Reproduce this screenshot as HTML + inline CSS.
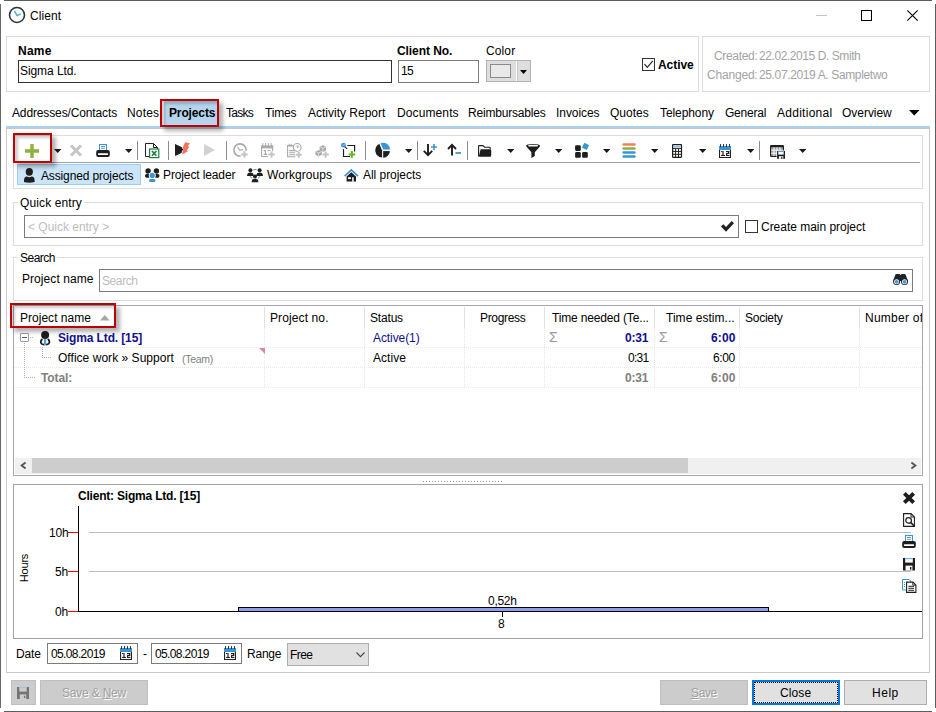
<!DOCTYPE html>
<html lang="en"><head><meta charset="utf-8"><title>Client</title>
<style>
html,body{margin:0;padding:0;}
body{width:936px;height:712px;position:relative;overflow:hidden;background:#fff;
 font-family:"Liberation Sans",sans-serif;font-size:12px;color:#000;}
.a{position:absolute;box-sizing:border-box;}
.t{position:absolute;white-space:nowrap;line-height:14px;font-size:12px;}
.t u{text-decoration:underline;}
svg{position:absolute;overflow:visible;}
.gb{border:1px solid #dcdcdc;}
.inp{border:1px solid #7a7a7a;background:#fff;}
.sep{background:#8c8c8c;width:1px;}
.btn{border:1px solid #adadad;background:#e1e1e1;}
.btnd{border:1px solid #bfbfbf;background:#cccccc;}
.red{border:2px solid #bf0000;box-shadow:4px 4px 4px rgba(0,0,0,.30), inset 3px 3px 3px rgba(0,0,0,.20);}
</style></head><body>
<div class="a " style="left:4px;top:0px;width:928px;height:1px;background:#5c5c5c"></div>
<div class="a " style="left:0px;top:4px;width:1px;height:704px;background:#686868"></div>
<div class="a " style="left:935px;top:4px;width:1px;height:704px;background:#5c5c5c"></div>
<div class="a " style="left:4px;top:711px;width:928px;height:1px;background:#5c5c5c"></div>
<svg style="left:8px;top:6px" width="18" height="18" viewBox="0 0 18 18"><circle cx="9" cy="9" r="7.5" fill="#fff" stroke="#26343a" stroke-width="1.55"/><path d="M6.4 4.8L9.1 9.7L12.8 7.8" stroke="#4fb3b8" stroke-width="1.5" fill="none" stroke-linejoin="round"/></svg>
<div class="a " style="left:816px;top:15px;width:11px;height:1px;background:#c4c4c4"></div>
<div class="a " style="left:861px;top:10px;width:11px;height:11px;border:1px solid #000"></div>
<svg style="left:907px;top:10px" width="11" height="11" viewBox="0 0 11 11"><path d="M0.3 0.3L10.7 10.7M10.7 0.3L0.3 10.7" stroke="#000" stroke-width="1.1" fill="none"/></svg>
<div class="a gb" style="left:6px;top:36px;width:693px;height:56px;"></div>
<div class="a gb" style="left:702px;top:36px;width:228px;height:56px;"></div>
<div class="a inp" style="left:18px;top:60px;width:374px;height:23px;border-color:#333"></div>
<div class="a inp" style="left:398px;top:60px;width:81px;height:23px;"></div>
<div class="a btn" style="left:486px;top:60px;width:45px;height:22px;background:#dedede;border-color:#b4b4b4"></div>
<div class="a " style="left:516px;top:61px;width:1px;height:20px;background:#fff"></div>
<div class="a " style="left:517px;top:61px;width:1px;height:20px;background:#c8c8c8"></div>
<div class="a " style="left:490px;top:64px;width:21px;height:14px;border:1px solid #8a8a8a;background:#e9e9e9"></div>
<svg style="left:520px;top:70px" width="8" height="4" viewBox="0 0 8 4"><path d="M0 0h7L3.5 4z" fill="#000"/></svg>
<div class="a " style="left:642px;top:58px;width:13px;height:13px;border:1px solid #333;background:#fff"></div>
<svg style="left:642px;top:58px" width="13" height="13" viewBox="0 0 13 13"><path d="M2.5 6.2L5.3 9.3L10.8 2.9" stroke="#222" stroke-width="1.15" fill="none"/></svg>
<div class="a " style="left:164px;top:101px;width:53px;height:25px;background:#b5d5ee"></div>
<div class="a " style="left:6px;top:126px;width:924px;height:2px;background:#a8d2f0"></div>
<div class="a " style="left:6px;top:128px;width:924px;height:545px;border:1px solid #c8c8c8"></div>
<svg style="left:909px;top:110px" width="11" height="6" viewBox="0 0 11 6"><path d="M0 0h10.5L5.25 5.6z" fill="#000"/></svg>
<div class="a gb" style="left:13px;top:135px;width:910px;height:54px;"></div>
<div class="a " style="left:14px;top:162px;width:906px;height:1px;background:#a0a0a0"></div>
<svg style="left:25px;top:144px" width="14" height="14" viewBox="0 0 14 14"><path d="M5.3 0h3.4v5.3H14v3.4H8.7V14H5.3V8.7H0V5.3h5.3z" fill="#8db13c"/></svg>
<svg style="left:54.3px;top:149px" width="8" height="4" viewBox="0 0 8 4"><path d="M0 0h7.4L3.7 4z" fill="#1a1a1a"/></svg>
<svg style="left:70px;top:144.5px" width="12" height="11" viewBox="0 0 12 11"><path d="M1 0.5L11 10.5M11 0.5L1 10.5" stroke="#c6c6c6" stroke-width="3" fill="none"/></svg>
<svg style="left:96px;top:144px" width="14" height="13" viewBox="0 0 14 13"><rect x="3.5" y="0.5" width="7" height="6" fill="#fff" stroke="#3a96d2" stroke-width="1"/><path d="M5 2.5h4M5 4.3h4" stroke="#3a96d2" stroke-width=".9"/><rect x="0.2" y="6" width="13.6" height="7" rx="2" fill="#1e1e1e"/><rect x="2" y="9.3" width="10" height="1.6" rx=".5" fill="#fff"/></svg>
<svg style="left:125px;top:149px" width="8" height="4" viewBox="0 0 8 4"><path d="M0 0h7.4L3.7 4z" fill="#1a1a1a"/></svg>
<div class="a sep" style="left:137px;top:141px;width:1px;height:19px;"></div>
<svg style="left:145px;top:143px" width="15" height="15" viewBox="0 0 15 15"><path d="M0.5 0.5h8l4 4v9h-12z" fill="#fff" stroke="#222" stroke-width="1"/><path d="M8.5 0.5v4h4" fill="none" stroke="#222"/><rect x="4.6" y="6" width="9.2" height="8.6" fill="#fff" stroke="#1e7e45" stroke-width="1.2"/><path d="M7 8L11.4 12.8M11.4 8L7 12.8" stroke="#1e7e45" stroke-width="1.7"/></svg>
<div class="a sep" style="left:168px;top:141px;width:1px;height:19px;"></div>
<svg style="left:175px;top:142px" width="16" height="14" viewBox="0 0 16 14"><path d="M0 1.9V13.9L13 7.9z" fill="#1e1e1e"/><path d="M10.2 0.3L15 1.2L12.9 4L14.3 4.8L12 8L12.6 9.6L7.2 12.6L7.5 9.4L8.9 7.6L7.6 5.7z" fill="#f8705c" stroke="#fff" stroke-width="1.3" paint-order="stroke" stroke-linejoin="round"/><path d="M6 7.6h2.4" stroke="#1e1e1e" stroke-width="1"/></svg>
<svg style="left:204px;top:144px" width="11" height="12" viewBox="0 0 11 12"><path d="M0 0v12L11 6z" fill="#d2d2d2"/></svg>
<div class="a sep" style="left:226px;top:141px;width:1px;height:19px;"></div>
<svg style="left:233px;top:143px" width="15" height="15" viewBox="0 0 15 15"><circle cx="7" cy="7" r="6.1" fill="none" stroke="#a9a9a9" stroke-width="1.6"/><path d="M4.6 3.8L7 7.6L10 6.2" stroke="#a9a9a9" stroke-width="1.1" fill="none"/><rect x="7.6" y="7.8" width="8" height="8" fill="#fff"/><path d="M11.4 8.2v6.4M8.2 11.4h6.4" stroke="#c4c4c4" stroke-width="2"/></svg>
<svg style="left:261px;top:143px" width="14" height="15" viewBox="0 0 14 15"><rect x="0.6" y="3.5" width="11" height="10" fill="#fff" stroke="#a9a9a9" stroke-width="1.1"/><rect x="0" y="2.4" width="12.2" height="3" fill="#a9a9a9"/><path d="M1.8 0v3M4.6 0v3M7.4 0v3M10.2 0v3" stroke="#a9a9a9" stroke-width="1"/><path d="M2.6 7.6h1.8v4M2.6 11.4h3.6M6.6 7.6h2.6" stroke="#a9a9a9" stroke-width="1.1" fill="none"/><rect x="6.8" y="8.2" width="8" height="8" fill="#fff"/><path d="M10.6 8.4v6.4M7.4 11.6h6.4" stroke="#c4c4c4" stroke-width="2"/></svg>
<svg style="left:287px;top:142.5px" width="15" height="15" viewBox="0 0 15 15"><path d="M0.6 2.6h9v11.2h-9z" fill="#fff" stroke="#a9a9a9" stroke-width="1.1"/><path d="M2.2 0.8v3M4.2 0.8v3" stroke="#a9a9a9"/><path d="M2.2 7.6h6M2.2 9.7h6M2.2 11.8h6" stroke="#a9a9a9" stroke-width="1.1"/><circle cx="10.2" cy="4.4" r="3.9" fill="#fff" stroke="#a9a9a9" stroke-width="1.1"/><path d="M10.2 2.2v2.4l1.8-0.9" stroke="#a9a9a9" fill="none"/><rect x="8.4" y="8.8" width="7" height="7" fill="#fff"/><path d="M11.8 8.8v6M8.8 11.8h6" stroke="#c4c4c4" stroke-width="2"/></svg>
<svg style="left:315px;top:144.5px" width="14" height="13" viewBox="0 0 14 13"><path d="M4.6 1.8L7.8 0.3L11 1.8V5.4L7.8 7L4.6 5.4z" fill="#a9a9a9"/><path d="M0.4 6.4L3.6 4.9L6.8 6.4V9.8L3.6 11.4L0.4 9.8z" fill="#a9a9a9"/><path d="M4.6 1.8L7.8 3.3L11 1.8M7.8 3.3V7M0.4 6.4L3.6 7.9L6.8 6.4M3.6 7.9v3.5" stroke="#e8e8e8" stroke-width=".8" fill="none"/><path d="M10.6 6.4v6.4M7.4 9.6h6.4" stroke="#c4c4c4" stroke-width="2"/></svg>
<svg style="left:341px;top:143px" width="15" height="15" viewBox="0 0 15 15"><path d="M6.3 2.5H13.6V8.6M2.5 6V13.5H9" stroke="#1e1e1e" stroke-width="1.2" fill="none"/><path d="M3.5 3.5L6.2 5.8" stroke="#1e1e1e" stroke-width="1.1"/><circle cx="2.4" cy="2.2" r="2.4" fill="#3a96d2"/><path d="M1.4 3.2L3.4 1.2" stroke="#cfe6f6" stroke-width=".8"/><path d="M10.9 8.1V14.7M7.6 11.4H14.2" stroke="#5cc010" stroke-width="2"/></svg>
<div class="a sep" style="left:365px;top:141px;width:1px;height:19px;"></div>
<svg style="left:375px;top:143px" width="16" height="16" viewBox="0 0 16 16"><path d="M7.5 7.4L4.62 0.26A7.7 7.7 0 0 0 7.50 15.10z" fill="#1e1e1e" stroke="#fff" stroke-width=".9" stroke-linejoin="round" transform="translate(0,0)"/><path d="M7.5 7.4L7.50 15.10A7.7 7.7 0 0 0 15.20 7.40z" fill="#1e1e1e" stroke="#fff" stroke-width=".9" stroke-linejoin="round" transform="translate(0.2,0.2)"/><path d="M7.5 7.4L15.20 7.40A7.7 7.7 0 0 0 4.62 0.26z" fill="#3a96d2" stroke="#fff" stroke-width=".9" stroke-linejoin="round" transform="translate(0.4,-0.4)"/></svg>
<svg style="left:405px;top:149px" width="8" height="4" viewBox="0 0 8 4"><path d="M0 0h7.4L3.7 4z" fill="#1a1a1a"/></svg>
<div class="a sep" style="left:417px;top:141px;width:1px;height:19px;"></div>
<svg style="left:423px;top:144px" width="15" height="13" viewBox="0 0 15 13"><path d="M5 0v11M0.8 6.8L5 11.2L9.2 6.8" stroke="#1e1e1e" stroke-width="1.9" fill="none"/><path d="M11 0v6M8 3h6" stroke="#3a96d2" stroke-width="1.6"/></svg>
<svg style="left:447.7px;top:144px" width="14" height="13" viewBox="0 0 14 13"><path d="M4 11.5V0.8M0 5L4 0.8L8 5" stroke="#1e1e1e" stroke-width="1.9" fill="none"/><path d="M7.5 9h5.5" stroke="#3a96d2" stroke-width="1.8"/></svg>
<div class="a sep" style="left:467px;top:141px;width:1px;height:19px;"></div>
<svg style="left:478px;top:145px" width="14" height="12" viewBox="0 0 14 12"><path d="M0.6 11.4V1.2Q0.6 0.6 1.2 0.6H5L6.5 2.2H11.5Q12.2 2.2 12.2 2.9V4" fill="#fff" stroke="#1e1e1e" stroke-width="1.1"/><path d="M2.6 4.3h9.6Q13.2 4.3 13.2 5.3V10.5Q13.2 11.8 12 11.8H1.6Q0.7 11.8 1 10.8z" fill="#1e1e1e"/></svg>
<svg style="left:506.8px;top:149px" width="8" height="4" viewBox="0 0 8 4"><path d="M0 0h7.4L3.7 4z" fill="#1a1a1a"/></svg>
<svg style="left:526px;top:144px" width="14.2" height="14" viewBox="0 0 15 14" preserveAspectRatio="none"><path d="M0.2 1.6Q0.2 0 7.5 0T14.8 1.6Q14.8 2.6 13.8 3.6L9.3 8.2V12L5.7 14V8.2L1.2 3.6Q0.2 2.6 0.2 1.6z" fill="#1e1e1e"/><ellipse cx="7.5" cy="1.7" rx="5.4" ry="0.9" fill="#f4f4f4"/></svg>
<svg style="left:555px;top:149px" width="8" height="4" viewBox="0 0 8 4"><path d="M0 0h7.4L3.7 4z" fill="#1a1a1a"/></svg>
<svg style="left:575px;top:143px" width="15" height="15" viewBox="0 0 15 15"><rect x="0.1" y="2.3" width="5.7" height="5.6" rx="1.3" fill="#1e1e1e"/><rect x="0.1" y="9.1" width="5.7" height="5.7" rx="1.3" fill="#1e1e1e"/><rect x="7.1" y="9.1" width="5.7" height="5.7" rx="1.3" fill="#1e1e1e"/><rect x="7.8" y="0.7" width="5.4" height="5.4" rx=".7" fill="#3a96d2" transform="rotate(25 10.5 3.4)"/></svg>
<svg style="left:603px;top:149px" width="8" height="4" viewBox="0 0 8 4"><path d="M0 0h7.4L3.7 4z" fill="#1a1a1a"/></svg>
<svg style="left:622px;top:143px" width="14" height="15" viewBox="0 0 14 15"><path d="M1.6 1.4h10.9" stroke="#f97a66" stroke-width="2.5" stroke-linecap="round"/><path d="M1.6 5.5h10.9" stroke="#8db13c" stroke-width="2.5" stroke-linecap="round"/><path d="M1.6 9.5h10.9M1.6 13.4h10.9" stroke="#3a96d2" stroke-width="2.5" stroke-linecap="round"/></svg>
<svg style="left:650.8px;top:149px" width="8" height="4" viewBox="0 0 8 4"><path d="M0 0h7.4L3.7 4z" fill="#1a1a1a"/></svg>
<svg style="left:672px;top:144px" width="11" height="14" viewBox="0 0 11 14"><rect x="0" y="0" width="10.1" height="13.9" rx="1.1" fill="#1e1e1e"/><rect x="1.3" y="1.2" width="7.5" height="2.9" fill="#fff"/><rect x="1.9" y="1.8" width="6.3" height="1.7" fill="#7cc0ee"/><rect x="1.20" y="5.00" width="1.9" height="1.9" fill="#fff"/><rect x="1.20" y="7.90" width="1.9" height="1.9" fill="#fff"/><rect x="1.20" y="10.80" width="1.9" height="1.9" fill="#fff"/><rect x="4.10" y="5.00" width="1.9" height="1.9" fill="#fff"/><rect x="4.10" y="7.90" width="1.9" height="1.9" fill="#fff"/><rect x="4.10" y="10.80" width="1.9" height="1.9" fill="#fff"/><rect x="7.00" y="5.00" width="1.9" height="1.9" fill="#fff"/><rect x="7.00" y="7.90" width="1.9" height="1.9" fill="#fff"/><rect x="7.00" y="10.80" width="1.9" height="1.9" fill="#fff"/></svg>
<svg style="left:699px;top:149px" width="8" height="4" viewBox="0 0 8 4"><path d="M0 0h7.4L3.7 4z" fill="#1a1a1a"/></svg>
<svg style="left:719px;top:144px" width="12" height="14" viewBox="0 0 12 14"><rect x="0" y="2" width="12" height="4.2" fill="#3a96d2"/><path d="M0.55 6V13.45H11.45V6" fill="#fff" stroke="#222" stroke-width="1.1"/><path d="M1.5 0v3.1M4.5 0v3.1M7.5 0v3.1M10.5 0v3.1" stroke="#222" stroke-width=".9"/><g fill="#222"><rect x="3.4" y="7" width="1.20" height="5.00"/><rect x="2.1" y="7" width="1.30" height="1.10"/><rect x="2.1" y="10.9" width="3.90" height="1.10"/><rect x="7" y="7" width="3.20" height="1.10"/><rect x="9" y="7" width="1.20" height="2.90"/><rect x="7" y="8.9" width="3.20" height="1.10"/><rect x="7" y="9.5" width="1.20" height="2.50"/><rect x="7" y="10.9" width="3.40" height="1.10"/></g></svg>
<svg style="left:747px;top:149px" width="8" height="4" viewBox="0 0 8 4"><path d="M0 0h7.4L3.7 4z" fill="#1a1a1a"/></svg>
<div class="a sep" style="left:759px;top:141px;width:1px;height:19px;"></div>
<svg style="left:770px;top:145px" width="16" height="14" viewBox="0 0 16 14"><rect x="0" y="0" width="14" height="12" rx="1.3" fill="#1e1e1e"/><rect x="1.1" y="2.2" width="11.8" height="8.7" fill="#9a9a9a"/><path d="M4 2.2v8.7M7 2.2v8.7M10 2.2v8.7M1.1 5.2h11.8M1.1 8.2h11.8" stroke="#fff" stroke-width="1"/><rect x="6.6" y="5.4" width="8.8" height="8.8" fill="#fff"/><rect x="7.1" y="5.9" width="7.9" height="7.9" fill="#1e1e1e"/><rect x="8.3" y="5.9" width="5.4" height="3.7" fill="#fff"/><rect x="8.3" y="5.9" width="5.4" height="1" fill="#3a96d2"/><rect x="8.9" y="11.2" width="4.4" height="2.6" fill="#fff"/><rect x="11.2" y="11.7" width="1.2" height="2.1" fill="#1e1e1e"/></svg>
<svg style="left:799px;top:149px" width="8" height="4" viewBox="0 0 8 4"><path d="M0 0h7.4L3.7 4z" fill="#1a1a1a"/></svg>
<div class="a " style="left:17px;top:164px;width:124px;height:21px;background:#cce4f7;border:1px solid #9fcdf0"></div>
<svg style="left:24px;top:167px" width="11" height="16" viewBox="0 0 11 16"><ellipse cx="5.3" cy="4.8" rx="3.6" ry="3.9" fill="#1e1e1e"/><path d="M0 15V13.2Q0 9.6 3 9.4Q5.3 11 7.6 9.4Q10.6 9.6 10.6 13.2V15Q5.3 16.6 0 15z" fill="#1e1e1e"/></svg>
<svg style="left:145px;top:168px" width="15" height="15" viewBox="0 0 15 15"><circle cx="3.1" cy="3" r="2.7" fill="#1e1e1e"/><circle cx="11.4" cy="3" r="2.7" fill="#1e1e1e"/><rect x="0" y="6.1" width="5.8" height="3.7" rx="1.7" fill="#1e1e1e"/><rect x="8.7" y="6.1" width="5.8" height="3.7" rx="1.7" fill="#1e1e1e"/><circle cx="7.25" cy="7.4" r="3.5" fill="#fff"/><circle cx="7.25" cy="7.4" r="2.6" fill="#3a96d2"/><rect x="4" y="10.9" width="6.5" height="3" rx="1.5" fill="#3a96d2"/></svg>
<svg style="left:247px;top:168px" width="16" height="14" viewBox="0 0 16 14"><circle cx="8" cy="6.5" r="5" fill="none" stroke="#3a96d2" stroke-width="1"/><circle cx="3.4" cy="2.4" r="3" fill="#fff"/><circle cx="12.6" cy="2.4" r="3" fill="#fff"/><circle cx="8" cy="9.4" r="3" fill="#fff"/><circle cx="3.4" cy="2.2" r="2.00" fill="#1e1e1e"/><path d="M0.04 7.96Q0.04 4.60 3.40 4.60T6.76 7.96z" fill="#1e1e1e"/><circle cx="12.6" cy="2.2" r="2.00" fill="#1e1e1e"/><path d="M9.24 7.96Q9.24 4.60 12.60 4.60T15.96 7.96z" fill="#1e1e1e"/><circle cx="8" cy="8.4" r="2.00" fill="#1e1e1e"/><path d="M4.64 14.16Q4.64 10.80 8.00 10.80T11.36 14.16z" fill="#1e1e1e"/></svg>
<svg style="left:344px;top:169px" width="15" height="13" viewBox="0 0 15 13"><path d="M0.6 7.2L7.3 0.9L14 7.2" stroke="#3a96d2" stroke-width="1.7" fill="none"/><path d="M2.6 7.6L7.3 3.2L12 7.6V12.6H2.6z" fill="#1e1e1e"/><rect x="4" y="8.2" width="2.9" height="1.9" fill="#fff"/><rect x="8.2" y="8.2" width="1.5" height="4.6" fill="#fff"/></svg>
<div class="a gb" style="left:13px;top:202px;width:910px;height:44px;"></div>
<div class="a inp" style="left:24px;top:215px;width:715px;height:23px;"></div>
<svg style="left:720px;top:220px" width="15" height="13" viewBox="0 0 15 13"><path d="M1 6.5L3.3 4.2L6 7L11.7 1L14 3.3L6 11.8z" fill="#222"/></svg>
<div class="a " style="left:745px;top:220px;width:13px;height:13px;border:1px solid #333;background:#fff"></div>
<div class="a gb" style="left:13px;top:257px;width:910px;height:44px;"></div>
<div class="a inp" style="left:99px;top:269px;width:814px;height:23px;"></div>
<svg style="left:893px;top:274px" width="16" height="12" viewBox="0 0 16 12"><path d="M3.4 0H6.4L7.5 0.9L8.6 0H11.6Q12.4 0 12.7 0.8L14.8 7H0.2L2.3 0.8Q2.6 0 3.4 0z" fill="#222"/><circle cx="3.6" cy="7.6" r="3.5" fill="#222"/><circle cx="11.5" cy="7.6" r="3.5" fill="#222"/><circle cx="3.6" cy="7.7" r="2.5" fill="#fff"/><circle cx="11.5" cy="7.7" r="2.5" fill="#fff"/><circle cx="3.7" cy="7.8" r="1.9" fill="#3d9be0"/><circle cx="11.6" cy="7.8" r="1.9" fill="#3d9be0"/></svg>
<div class="a " style="left:13px;top:305px;width:910px;height:171px;border:1px solid #a2a7b2;background:#fff"></div>
<div class="a " style="left:264px;top:307px;width:1px;height:21px;background:#e2e2e2"></div>
<div class="a " style="left:264px;top:328px;width:1px;height:60px;background:repeating-linear-gradient(#e6e6e6 0 1px,#fff 1px 2px)"></div>
<div class="a " style="left:364px;top:307px;width:1px;height:21px;background:#e2e2e2"></div>
<div class="a " style="left:364px;top:328px;width:1px;height:60px;background:repeating-linear-gradient(#e6e6e6 0 1px,#fff 1px 2px)"></div>
<div class="a " style="left:464px;top:307px;width:1px;height:21px;background:#e2e2e2"></div>
<div class="a " style="left:464px;top:328px;width:1px;height:60px;background:repeating-linear-gradient(#e6e6e6 0 1px,#fff 1px 2px)"></div>
<div class="a " style="left:544px;top:307px;width:1px;height:21px;background:#e2e2e2"></div>
<div class="a " style="left:544px;top:328px;width:1px;height:60px;background:repeating-linear-gradient(#e6e6e6 0 1px,#fff 1px 2px)"></div>
<div class="a " style="left:654px;top:307px;width:1px;height:21px;background:#e2e2e2"></div>
<div class="a " style="left:654px;top:328px;width:1px;height:60px;background:repeating-linear-gradient(#e6e6e6 0 1px,#fff 1px 2px)"></div>
<div class="a " style="left:739px;top:307px;width:1px;height:21px;background:#e2e2e2"></div>
<div class="a " style="left:739px;top:328px;width:1px;height:60px;background:repeating-linear-gradient(#e6e6e6 0 1px,#fff 1px 2px)"></div>
<div class="a " style="left:859px;top:307px;width:1px;height:21px;background:#e2e2e2"></div>
<div class="a " style="left:859px;top:328px;width:1px;height:60px;background:repeating-linear-gradient(#e6e6e6 0 1px,#fff 1px 2px)"></div>
<div class="a " style="left:14px;top:347px;width:908px;height:1px;background:repeating-linear-gradient(90deg,#e9e9e9 0 1px,#fff 1px 2px)"></div>
<div class="a " style="left:14px;top:367px;width:908px;height:1px;background:repeating-linear-gradient(90deg,#e9e9e9 0 1px,#fff 1px 2px)"></div>
<div class="a " style="left:14px;top:387px;width:908px;height:1px;background:repeating-linear-gradient(90deg,#e9e9e9 0 1px,#fff 1px 2px)"></div>
<svg style="left:100px;top:315px" width="10" height="6" viewBox="0 0 10 6"><path d="M0 5.4L4.8 0L9.6 5.4z" fill="#a6a6a6"/></svg>
<div class="a " style="left:24px;top:343px;width:1px;height:35px;background:repeating-linear-gradient(#b0b0b0 0 1px,#fff 1px 2px)"></div>
<div class="a " style="left:24px;top:377px;width:11px;height:1px;background:repeating-linear-gradient(90deg,#b0b0b0 0 1px,#fff 1px 2px)"></div>
<div class="a " style="left:30px;top:337px;width:4px;height:1px;background:repeating-linear-gradient(90deg,#b0b0b0 0 1px,#fff 1px 2px)"></div>
<div class="a " style="left:42px;top:347px;width:1px;height:11px;background:repeating-linear-gradient(#b0b0b0 0 1px,#fff 1px 2px)"></div>
<div class="a " style="left:42px;top:357px;width:9px;height:1px;background:repeating-linear-gradient(90deg,#b0b0b0 0 1px,#fff 1px 2px)"></div>
<div class="a " style="left:20px;top:333px;width:9px;height:9px;border:1px solid #9aa0aa;background:#fff;border-radius:1px"></div>
<div class="a " style="left:22px;top:337px;width:5px;height:1px;background:#4a5a8a"></div>
<svg style="left:39px;top:331px" width="13" height="15" viewBox="0 0 13 15"><circle cx="6.1" cy="3.9" r="4" fill="#1e1e1e"/><path d="M2.9 8.4Q1 10.6 2.3 12.6Q3.8 13.7 5.2 13.5M9.3 8.4Q11.2 10.6 9.9 12.6Q8.4 13.7 7 13.5" stroke="#1e1e1e" stroke-width="1.7" fill="none" stroke-linecap="round"/><rect x="5" y="7.9" width="2.2" height="6.1" fill="#4aa3de"/></svg>
<svg style="left:258.5px;top:348px" width="6" height="6" viewBox="0 0 6 6"><path d="M0 0h6v6z" fill="#d98a98"/></svg>
<div class="a " style="left:15px;top:458px;width:906px;height:16px;background:#f0f0f0"></div>
<div class="a " style="left:32px;top:458px;width:656px;height:15px;background:#cdcdcd"></div>
<svg style="left:20px;top:462px" width="7" height="7" viewBox="0 0 7 7"><path d="M5.6 0.4L1.6 3.5L5.6 6.6" stroke="#555" stroke-width="1.9" fill="none"/></svg>
<svg style="left:910px;top:462px" width="7" height="7" viewBox="0 0 7 7"><path d="M1.4 0.4L5.4 3.5L1.4 6.6" stroke="#555" stroke-width="1.9" fill="none"/></svg>
<div class="a " style="left:423px;top:481px;width:80px;height:1px;background:repeating-linear-gradient(90deg,#9a9a9a 0 1px,#fff 1px 3px)"></div>
<div class="a " style="left:13px;top:484px;width:910px;height:155px;border:1px solid #a3a3a3;background:#fff"></div>
<div class="a " style="left:89px;top:532px;width:822px;height:1px;background:#bdbdbd"></div>
<div class="a " style="left:89px;top:571px;width:822px;height:1px;background:#bdbdbd"></div>
<div class="a " style="left:78px;top:506px;width:1px;height:106px;background:#000"></div>
<div class="a " style="left:78px;top:611px;width:844px;height:1px;background:#000"></div>
<div class="a " style="left:68px;top:532px;width:10px;height:1px;background:#f00"></div>
<div class="a " style="left:68px;top:571px;width:10px;height:1px;background:#f00"></div>
<div class="a " style="left:68px;top:611px;width:10px;height:1px;background:#f00"></div>
<div class="a " style="left:238px;top:607px;width:531px;height:5px;background:#8c9eec;border:1px solid #000"></div>
<div class="a " style="left:502px;top:611px;width:1px;height:6px;background:#000"></div>
<span class="t" style="left:23.5px;top:567.5px;transform:translate(-50%,-50%) rotate(-90deg);font-size:11px;letter-spacing:-0.2px">Hours</span>
<svg style="left:903px;top:492px" width="12" height="12" viewBox="0 0 12 12"><path d="M2.7 0L6 3.3L9.3 0L12 2.7L8.7 6L12 9.3L9.3 12L6 8.7L2.7 12L0 9.3L3.3 6L0 2.7z" fill="#1e1e1e"/></svg>
<svg style="left:903px;top:513px" width="13" height="14" viewBox="0 0 13 14"><path d="M0.6 0.6h7.4l3.4 3.4v9.4h-10.8z" fill="#fff" stroke="#1e1e1e" stroke-width="1.1"/><path d="M8 0.6v3.4h3.4" fill="none" stroke="#1e1e1e" stroke-width=".9"/><circle cx="5.6" cy="7.4" r="2.8" fill="#fff" stroke="#1e1e1e" stroke-width="1.2"/><path d="M7.6 9.4L11.4 13.2" stroke="#1e1e1e" stroke-width="1.6"/></svg>
<svg style="left:902px;top:535px" width="14" height="13" viewBox="0 0 14 13"><rect x="3.5" y="0.5" width="7" height="6" fill="#fff" stroke="#3a96d2" stroke-width="1"/><path d="M5 2.5h4M5 4.3h4" stroke="#3a96d2" stroke-width=".9"/><rect x="0.2" y="6" width="13.6" height="7" rx="2" fill="#1e1e1e"/><rect x="2" y="9.3" width="10" height="1.6" rx=".5" fill="#fff"/></svg>
<svg style="left:903px;top:557.5px" width="12" height="12.5" viewBox="0 0 12 12.5"><path d="M0 0h12v12.5h-12z" fill="#1e1e1e"/><rect x="2.2" y="0" width="7.6" height="4.6" fill="#fff"/><rect x="2.2" y="0" width="7.6" height="1.2" fill="#6db3e8"/><rect x="2.6" y="7.6" width="6.8" height="4.9" fill="#fff"/><rect x="7" y="9" width="1.4" height="2.6" fill="#1e1e1e"/></svg>
<svg style="left:901.5px;top:579px" width="15" height="14" viewBox="0 0 15 14"><path d="M0.5 0.5h6.5l2 2v8.5h-8.5z" fill="#fff" stroke="#3a96d2" stroke-width="1"/><path d="M2 3.5h1M2 5.5h1M2 7.5h1" stroke="#3a96d2" stroke-width="1"/><path d="M4.6 3.1h6.3l3 3v7.3h-9.3z" fill="#fff" stroke="#1e1e1e" stroke-width="1.1"/><path d="M6.4 7.3h5.6M6.4 9.3h5.6M6.4 11.3h5.6" stroke="#1e1e1e" stroke-width="1"/><path d="M10.8 3.2v3h3" fill="none" stroke="#1e1e1e" stroke-width=".9"/></svg>
<div class="a inp" style="left:47px;top:643px;width:91px;height:21px;"></div>
<div class="a inp" style="left:151px;top:643px;width:91px;height:21px;"></div>
<svg style="left:120px;top:646px" width="12" height="14" viewBox="0 0 12 14"><rect x="0" y="2" width="12" height="4.2" fill="#3a96d2"/><path d="M0.55 6V13.45H11.45V6" fill="#fff" stroke="#222" stroke-width="1.1"/><path d="M1.5 0v3.1M4.5 0v3.1M7.5 0v3.1M10.5 0v3.1" stroke="#222" stroke-width=".9"/><g fill="#222"><rect x="3.4" y="7" width="1.20" height="5.00"/><rect x="2.1" y="7" width="1.30" height="1.10"/><rect x="2.1" y="10.9" width="3.90" height="1.10"/><rect x="7" y="7" width="3.20" height="1.10"/><rect x="9" y="7" width="1.20" height="2.90"/><rect x="7" y="8.9" width="3.20" height="1.10"/><rect x="7" y="9.5" width="1.20" height="2.50"/><rect x="7" y="10.9" width="3.40" height="1.10"/></g></svg>
<svg style="left:224px;top:646px" width="12" height="14" viewBox="0 0 12 14"><rect x="0" y="2" width="12" height="4.2" fill="#3a96d2"/><path d="M0.55 6V13.45H11.45V6" fill="#fff" stroke="#222" stroke-width="1.1"/><path d="M1.5 0v3.1M4.5 0v3.1M7.5 0v3.1M10.5 0v3.1" stroke="#222" stroke-width=".9"/><g fill="#222"><rect x="3.4" y="7" width="1.20" height="5.00"/><rect x="2.1" y="7" width="1.30" height="1.10"/><rect x="2.1" y="10.9" width="3.90" height="1.10"/><rect x="7" y="7" width="3.20" height="1.10"/><rect x="9" y="7" width="1.20" height="2.90"/><rect x="7" y="8.9" width="3.20" height="1.10"/><rect x="7" y="9.5" width="1.20" height="2.50"/><rect x="7" y="10.9" width="3.40" height="1.10"/></g></svg>
<div class="a btn" style="left:287px;top:643px;width:82px;height:23px;"></div>
<svg style="left:356px;top:652px" width="9" height="6" viewBox="0 0 9 6"><path d="M0.5 0.5L4.5 4.7L8.5 0.5" stroke="#444" stroke-width="1.1" fill="none"/></svg>
<div class="a btnd" style="left:11px;top:680px;width:25px;height:25px;"></div>
<svg style="left:17px;top:687px" width="12" height="12" viewBox="0 0 13 13" preserveAspectRatio="none"><path d="M0 0h13v13h-13z" fill="#747474"/><rect x="2.5" y="0" width="8" height="5" fill="#ccc"/><rect x="2.5" y="0" width="8" height="1" fill="#9cc3e6"/><rect x="3" y="8" width="7" height="5" fill="#ccc"/><rect x="7.5" y="9.5" width="1.5" height="2.5" fill="#747474"/></svg>
<div class="a btnd" style="left:40px;top:680px;width:108px;height:25px;"></div>
<div class="a btnd" style="left:660px;top:680px;width:88px;height:25px;"></div>
<div class="a btn" style="left:752px;top:680px;width:88px;height:25px;border:2px solid #0078d7"></div>
<div class="a " style="left:754px;top:682px;width:84px;height:21px;border:1px dotted #000"></div>
<div class="a btn" style="left:844px;top:680px;width:83px;height:25px;"></div>
<div class="a red" style="left:160px;top:99px;width:59px;height:28px;"></div>
<div class="a red" style="left:13px;top:133px;width:39px;height:30px;"></div>
<div class="a red" style="left:10px;top:303px;width:106px;height:25px;"></div>
<span class="t" id="t0" style="left:30.00px;top:9.00px;letter-spacing:0.090px;">Client</span>
<span class="t" id="t1" style="left:18.00px;top:44.00px;font-weight:bold;letter-spacing:0.225px;">Name</span>
<span class="t" id="t2" style="left:20.00px;top:64.00px;letter-spacing:-0.075px;">Sigma Ltd.</span>
<span class="t" id="t3" style="left:397.00px;top:44.00px;font-weight:bold;letter-spacing:-0.075px;">Client No.</span>
<span class="t" id="t4" style="left:401.00px;top:64.00px;letter-spacing:-0.750px;">15</span>
<span class="t" id="t5" style="left:486.00px;top:44.00px;letter-spacing:0.113px;">Color</span>
<span class="t" id="t6" style="left:658.00px;top:58.00px;font-weight:bold;letter-spacing:-0.045px;">Active</span>
<span class="t" id="t7" style="left:714.00px;top:49.00px;color:#a3a3a3;letter-spacing:-0.321px;">Created:</span>
<span class="t" id="t8" style="left:759.00px;top:49.00px;color:#a3a3a3;letter-spacing:-0.425px;">22.02.2015 D. Smith</span>
<span class="t" id="t9" style="left:707.00px;top:68.00px;color:#a3a3a3;letter-spacing:-0.193px;">Changed:</span>
<span class="t" id="t10" style="left:759.00px;top:68.00px;color:#a3a3a3;letter-spacing:-0.368px;">25.07.2019 A. Sampletwo</span>
<span class="t" id="t11" style="left:12.00px;top:106.00px;letter-spacing:-0.132px;">Addresses/Contacts</span>
<span class="t" id="t12" style="left:127.00px;top:106.00px;letter-spacing:0.169px;">Notes</span>
<span class="t" id="t13" style="left:226.00px;top:106.00px;letter-spacing:-0.731px;">Tasks</span>
<span class="t" id="t14" style="left:265.00px;top:106.00px;letter-spacing:-0.169px;">Times</span>
<span class="t" id="t15" style="left:308.00px;top:106.00px;letter-spacing:0.000px;">Activity Report</span>
<span class="t" id="t16" style="left:397.00px;top:106.00px;letter-spacing:0.112px;">Documents</span>
<span class="t" id="t17" style="left:468.00px;top:106.00px;letter-spacing:-0.188px;">Reimbursables</span>
<span class="t" id="t18" style="left:556.00px;top:106.00px;letter-spacing:-0.064px;">Invoices</span>
<span class="t" id="t19" style="left:610.00px;top:106.00px;letter-spacing:0.000px;">Quotes</span>
<span class="t" id="t20" style="left:660.00px;top:106.00px;letter-spacing:-0.084px;">Telephony</span>
<span class="t" id="t21" style="left:725.00px;top:106.00px;letter-spacing:-0.225px;">General</span>
<span class="t" id="t22" style="left:777.00px;top:106.00px;letter-spacing:0.275px;">Additional</span>
<span class="t" id="t23" style="left:842.00px;top:106.00px;letter-spacing:-0.032px;">Overview</span>
<span class="t" id="t24" style="left:169.00px;top:106.00px;font-weight:bold;letter-spacing:-0.129px;">Projects</span>
<span class="t" id="t25" style="left:41.00px;top:169.00px;letter-spacing:-0.141px;">Assigned projects</span>
<span class="t" id="t26" style="left:163.00px;top:168.00px;letter-spacing:-0.121px;">Project leader</span>
<span class="t" id="t27" style="left:267.00px;top:168.00px;letter-spacing:0.050px;">Workgroups</span>
<span class="t" id="t28" style="left:363.00px;top:168.00px;letter-spacing:-0.041px;">All projects</span>
<span class="t" id="t29" style="left:20.00px;top:196.00px;letter-spacing:0.113px;background:#fff;padding:0 2px;margin-left:-2px;">Quick entry</span>
<span class="t" id="t30" style="left:28.00px;top:220.00px;color:#bdbdbd;letter-spacing:-0.016px;">&lt; Quick entry &gt;</span>
<span class="t" id="t31" style="left:761.00px;top:220.00px;letter-spacing:-0.025px;">Create main project</span>
<span class="t" id="t32" style="left:20.00px;top:251.00px;letter-spacing:-0.495px;background:#fff;padding:0 2px;margin-left:-2px;">Search</span>
<span class="t" id="t33" style="left:22.00px;top:272.00px;letter-spacing:0.061px;">Project name</span>
<span class="t" id="t34" style="left:102.00px;top:274.00px;color:#bdbdbd;letter-spacing:-0.405px;">Search</span>
<span class="t" id="t35" style="left:20.00px;top:311.00px;letter-spacing:0.020px;">Project name</span>
<span class="t" id="t36" style="left:270.00px;top:311.00px;letter-spacing:0.113px;">Project no.</span>
<span class="t" id="t37" style="left:370.00px;top:311.00px;letter-spacing:-0.180px;">Status</span>
<span class="t" id="t38" style="left:480.00px;top:311.00px;letter-spacing:-0.321px;">Progress</span>
<span class="t" id="t39" style="left:552.00px;top:311.00px;letter-spacing:-0.159px;">Time needed (Te...</span>
<span class="t" id="t40" style="left:666.00px;top:311.00px;letter-spacing:0.037px;">Time estim...</span>
<span class="t" id="t41" style="left:745.00px;top:311.00px;letter-spacing:-0.263px;">Society</span>
<span class="t" id="t42" style="left:865.00px;top:311.00px;letter-spacing:0.253px;width:56.5px;overflow:hidden;">Number of</span>
<span class="t" id="t43" style="left:58.00px;top:331.00px;font-weight:bold;color:#10108c;letter-spacing:-0.129px;">Sigma Ltd. [15]</span>
<span class="t" id="t44" style="left:373.00px;top:331.00px;color:#10108c;letter-spacing:-0.084px;">Active(1)</span>
<span class="t" id="t45" style="left:625.00px;top:331.00px;font-weight:bold;color:#10108c;letter-spacing:-0.225px;">0:31</span>
<span class="t" id="t46" style="left:711.00px;top:331.00px;font-weight:bold;color:#10108c;letter-spacing:0.150px;">6:00</span>
<span class="t" id="t47" style="left:58.00px;top:351.00px;letter-spacing:0.034px;">Office work » Support</span>
<span class="t" id="t48" style="left:182.00px;top:352.00px;font-size:10.5px;color:#808080;letter-spacing:-0.270px;">(Team)</span>
<span class="t" id="t49" style="left:373.00px;top:351.00px;letter-spacing:0.045px;">Active</span>
<span class="t" id="t50" style="left:628.00px;top:351.00px;letter-spacing:-0.750px;">0:31</span>
<span class="t" id="t51" style="left:713.00px;top:351.00px;letter-spacing:-0.375px;">6:00</span>
<span class="t" id="t52" style="left:41.00px;top:371.00px;font-weight:bold;color:#808080;letter-spacing:-0.090px;">Total:</span>
<span class="t" id="t53" style="left:625.00px;top:371.00px;font-weight:bold;color:#808080;letter-spacing:-0.225px;">0:31</span>
<span class="t" id="t54" style="left:711.00px;top:371.00px;font-weight:bold;color:#808080;letter-spacing:0.150px;">6:00</span>
<span class="t" id="t55" style="left:549.00px;top:330.00px;font-size:14px;color:#9a9a9a;font-family:"Liberation Serif", serif;letter-spacing:0.600px;">Σ</span>
<span class="t" id="t56" style="left:659.00px;top:330.00px;font-size:14px;color:#9a9a9a;font-family:"Liberation Serif", serif;letter-spacing:0.600px;">Σ</span>
<span class="t" id="t57" style="left:78.00px;top:489.00px;font-weight:bold;letter-spacing:-0.205px;">Client: Sigma Ltd. [15]</span>
<span class="t" id="t58" style="left:49.00px;top:526.00px;letter-spacing:-0.113px;">10h</span>
<span class="t" id="t59" style="left:55.00px;top:565.00px;letter-spacing:-0.225px;">5h</span>
<span class="t" id="t60" style="left:55.00px;top:605.00px;letter-spacing:-0.225px;">0h</span>
<span class="t" id="t61" style="left:488.00px;top:594.00px;letter-spacing:-0.281px;">0,52h</span>
<span class="t" id="t62" style="left:498.00px;top:617.00px;letter-spacing:-0.675px;">8</span>
<span class="t" id="t63" style="left:16.00px;top:647.00px;letter-spacing:-0.150px;">Date</span>
<span class="t" id="t64" style="left:51.00px;top:647.00px;letter-spacing:-0.625px;">05.08.2019</span>
<span class="t" id="t65" style="left:143.00px;top:647.00px;letter-spacing:0.600px;">-</span>
<span class="t" id="t66" style="left:155.00px;top:647.00px;letter-spacing:-0.625px;">05.08.2019</span>
<span class="t" id="t67" style="left:247.00px;top:647.00px;letter-spacing:-0.225px;">Range</span>
<span class="t" id="t68" style="left:290.00px;top:648.00px;letter-spacing:-0.600px;">Free</span>
<span class="t" id="t69" style="left:62.00px;top:686.00px;color:#a0a0a0;text-shadow:1px 1px 0 #fff;letter-spacing:-0.200px;">Save &amp; <u>N</u>ew</span>
<span class="t" id="t70" style="left:691.00px;top:686.00px;color:#a0a0a0;text-shadow:1px 1px 0 #fff;letter-spacing:-0.375px;"><u>S</u>ave</span>
<span class="t" id="t71" style="left:780.00px;top:686.00px;letter-spacing:0.113px;">Close</span>
<span class="t" id="t72" style="left:872.00px;top:686.00px;letter-spacing:0.525px;">Help</span>
</body></html>
